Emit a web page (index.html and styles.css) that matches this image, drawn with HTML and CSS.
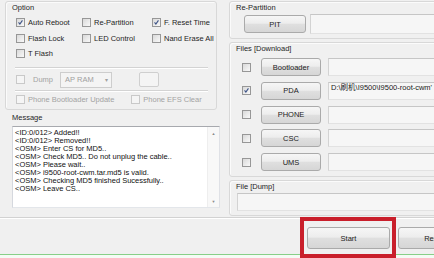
FILE: index.html
```html
<!DOCTYPE html>
<html>
<head>
<meta charset="utf-8">
<link rel="stylesheet" href="styles.css">
</head>
<body>
<div class="app">
  <div class="top">
    <div class="left">
      <div class="group option">
        <div class="glabel">Option</div>
        <div class="opts">
          <div class="chk"><span class="cb on"><svg viewBox="0 0 9 9"><path d="M2 4.3 L3.7 6.4 L7 1.8" /></svg></span>Auto Reboot</div>
          <div class="chk"><span class="cb"></span>Re-Partition</div>
          <div class="chk"><span class="cb on"><svg viewBox="0 0 9 9"><path d="M2 4.3 L3.7 6.4 L7 1.8" /></svg></span>F. Reset Time</div>
          <div class="chk"><span class="cb"></span>Flash Lock</div>
          <div class="chk"><span class="cb"></span>LED Control</div>
          <div class="chk"><span class="cb"></span>Nand Erase All</div>
          <div class="chk"><span class="cb"></span>T Flash</div>
        </div>
        <div class="sep"></div>
        <div class="dumprow">
          <div class="chk dis"><span class="cb"></span><span class="dumptxt">Dump</span></div>
          <div class="select"><span>AP RAM</span><span class="arr">▾</span></div>
          <div class="smallbtn"></div>
        </div>
        <div class="sep sep2"></div>
        <div class="phonerow">
          <div class="chk dis"><span class="cb"></span>Phone Bootloader Update</div>
          <div class="chk dis efs"><span class="cb"></span>Phone EFS Clear</div>
        </div>
      </div>
      <div class="msg">
        <div class="mlabel">Message</div>
        <div class="textarea">
          <div class="lines">
            <div>&lt;ID:0/012&gt; Added!!</div>
            <div>&lt;ID:0/012&gt; Removed!!</div>
            <div>&lt;OSM&gt; Enter CS for MD5..</div>
            <div>&lt;OSM&gt; Check MD5.. Do not unplug the cable..</div>
            <div>&lt;OSM&gt; Please wait..</div>
            <div>&lt;OSM&gt; i9500-root-cwm.tar.md5 is valid.</div>
            <div>&lt;OSM&gt; Checking MD5 finished Sucessfully..</div>
            <div>&lt;OSM&gt; Leave CS..</div>
          </div>
          <div class="scroll"><span>▲</span><span>▼</span></div>
        </div>
      </div>
    </div>
    <div class="right">
      <div class="group repart">
        <div class="glabel">Re-Partition</div>
        <div class="pitrow">
          <div class="btn pit">PIT</div>
          <div class="field"></div>
        </div>
      </div>
      <div class="group files">
        <div class="glabel">Files [Download]</div>
        <div class="frows">
          <div class="frow"><span class="cb"></span><div class="btn fbtn">Bootloader</div><div class="field"></div></div>
          <div class="frow"><span class="cb on"><svg viewBox="0 0 9 9"><path d="M2 4.3 L3.7 6.4 L7 1.8" /></svg></span><div class="btn fbtn">PDA</div><div class="field"><span class="path">D:\刷机\I9500\I9500-root-cwm'</span></div></div>
          <div class="frow"><span class="cb"></span><div class="btn fbtn">PHONE</div><div class="field"></div></div>
          <div class="frow"><span class="cb"></span><div class="btn fbtn">CSC</div><div class="field"></div></div>
          <div class="frow"><span class="cb"></span><div class="btn fbtn">UMS</div><div class="field"></div></div>
        </div>
      </div>
      <div class="group dump">
        <div class="glabel">File [Dump]</div>
        <div class="field dumpfield"></div>
      </div>
    </div>
  </div>
  <div class="bottom">
    <div class="btn big start">Start</div>
    <div class="btn big reset">Reset</div>
  </div>
  <div class="status"></div>
  <div class="highlight"></div>
</div>
</body>
</html>
```
FILE: styles.css
```css
html, body {
  margin: 0;
  padding: 0;
}
body {
  width: 434px;
  height: 258px;
  overflow: hidden;
  background: #f0f0f0;
  font-family: "Liberation Sans", "Noto Sans CJK SC", sans-serif;
  font-size: 7.5px;
  color: #1e1e1e;
}
.app {
  position: relative;
  width: 520px;
  height: 258px;
  display: flex;
  flex-direction: column;
}
.top {
  display: flex;
  height: 217px;
  border-bottom: 1px solid #d2d2d2;
}
.left {
  width: 217px;
  padding-left: 5px;
  display: flex;
  flex-direction: column;
}
.group {
  border: 1px solid #d8d8d8;
  border-radius: 3px;
  box-shadow: inset 1px 1px 0 #fbfbfb;
}
.glabel {
  line-height: 9px;
  height: 9px;
  padding-left: 6px;
  padding-top: 1px;
}
.option {
  margin-top: 1px;
  width: 210px;
  padding-bottom: 4px;
}
.opts {
  margin-top: 3px;
  padding-left: 10px;
  display: grid;
  grid-template-columns: 66px 70px 1fr;
  grid-auto-rows: 15.5px;
}
.chk {
  display: flex;
  align-items: center;
  white-space: nowrap;
}
.cb {
  width: 9px;
  height: 9px;
  box-sizing: border-box;
  border: 1px solid #979797;
  background: linear-gradient(135deg, #d9d9d9, #f9f9f9);
  margin-right: 3px;
  flex: none;
  display: flex;
}
.cb svg {
  width: 7px;
  height: 7px;
}
.cb path {
  fill: none;
  stroke: #3c5286;
  stroke-width: 1.4;
}
.chk.dis {
  color: #a3a3a3;
}
.chk.dis .cb {
  border-color: #c9c9c9;
  background: #f5f5f5;
}
.sep {
  margin: 5px 8px 0 9px;
  height: 1px;
  background: #d3d3d3;
  border-bottom: 1px solid #ffffff;
}
.sep2 {
  margin-top: 2px;
}
.dumprow {
  margin-top: 3px;
  height: 16px;
  display: flex;
  align-items: center;
  padding-left: 10px;
}
.dumptxt {
  margin-left: 5px;
}
.select {
  margin-left: 7px;
  width: 52px;
  height: 16px;
  box-sizing: border-box;
  border: 1px solid #cdcdcd;
  background: #f4f4f4;
  color: #a0a0a0;
  display: flex;
  align-items: center;
  justify-content: space-between;
  padding: 0 3px 0 4px;
}
.arr {
  font-size: 6px;
}
.smallbtn {
  margin-left: 27px;
  width: 20px;
  height: 15px;
  box-sizing: border-box;
  border: 1px solid #cfcfcf;
  border-radius: 2px;
  background: #f4f4f4;
}
.phonerow {
  margin-top: 3px;
  height: 10px;
  display: flex;
  align-items: center;
  padding-left: 10px;
}
.efs {
  margin-left: 17px;
}
.msg {
  display: flex;
  flex-direction: column;
}
.mlabel {
  margin-top: 3px;
  line-height: 9px;
  padding-left: 7px;
}
.textarea {
  margin-top: 4px;
  margin-left: 7px;
  width: 208px;
  height: 82px;
  box-sizing: border-box;
  border: 1px solid;
  border-color: #a7a9ae #dfe1e6 #e3e6ea #d5d8de;
  background: #ffffff;
  display: flex;
}
.lines {
  flex: 1;
  padding: 2px 2px;
  line-height: 8px;
  color: #111;
  white-space: nowrap;
  overflow: hidden;
}
.scroll {
  width: 11px;
  border-left: 1px solid #eeeeee;
  background: #f8f8f8;
  display: flex;
  flex-direction: column;
  justify-content: space-between;
  align-items: center;
  font-size: 4px;
  color: #8a8a8a;
  padding: 4px 0 3px;
}
.right {
  margin-left: 7px;
  width: 290px;
  display: flex;
  flex-direction: column;
}
.repart {
  margin-top: 1px;
  height: 36px;
}
.pitrow {
  margin-top: 2px;
  display: flex;
  align-items: center;
  height: 20px;
}
.btn {
  box-sizing: border-box;
  border: 1px solid #aaaaaa;
  border-radius: 3px;
  background: linear-gradient(#f6f6f6 0%, #ededed 45%, #dfdfdf 52%, #d6d6d6 100%);
  display: flex;
  align-items: center;
  justify-content: center;
  color: #222;
  flex: none;
}
.pit {
  margin-left: 14px;
  width: 62px;
  height: 18px;
}
.field {
  box-sizing: border-box;
  border: 1px solid;
  border-color: #c6c6c6 #dcdcdc #e2e2e2 #d3d3d3;
  background: #f6f6f6;
  flex: 1;
}
.pitrow .field {
  margin-left: 4px;
  height: 20px;
}
.files {
  margin-top: 3px;
  padding-bottom: 5px;
}
.frows {
  margin-top: 5px;
  display: flex;
  flex-direction: column;
  gap: 5.75px;
}
.frow {
  display: flex;
  align-items: center;
  height: 18px;
}
.frow .cb {
  margin-left: 12px;
  margin-right: 0;
}
.fbtn {
  margin-left: 10px;
  width: 60px;
  height: 18px;
}
.frow .field {
  margin-left: 7px;
  height: 18px;
}
.path {
  display: block;
  padding: 1px 0 0 2px;
  line-height: 8px;
  white-space: nowrap;
  color: #1a1a1a;
}
.dump {
  margin-top: 3px;
  padding-bottom: 4px;
}
.dumpfield {
  margin: 2px 0 0 7px;
  height: 18px;
}
.bottom {
  height: 36px;
  border-top: 1px solid #ffffff;
  display: flex;
  align-items: flex-start;
  padding-top: 8px;
  box-sizing: border-box;
}
.big {
  width: 83px;
  height: 22px;
}
.start {
  margin-left: 307px;
}
.reset {
  margin-left: 8px;
  width: 72px;
}
.status {
  border-top: 1px solid #88cf88;
  height: 3px;
  background: #f5fbf5;
}
.highlight {
  position: absolute;
  left: 300px;
  top: 217px;
  width: 96px;
  height: 41px;
  box-sizing: border-box;
  border: 4px solid #c91f2b;
}
```
